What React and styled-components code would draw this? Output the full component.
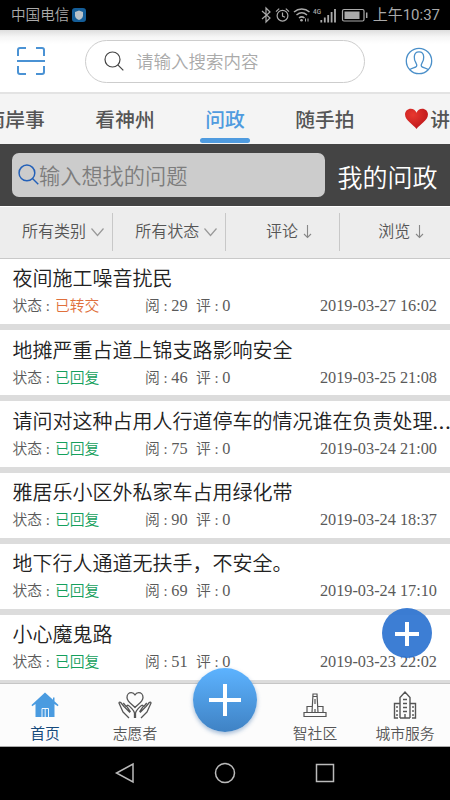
import styled, { createGlobalStyle } from 'styled-components'

const GlobalStyle = createGlobalStyle`
  * {
    box-sizing: border-box;
  }

  body {
    margin: 0;
    background: #fff;
    font-family: Roboto, 'Noto Sans CJK SC', sans-serif;
    font-weight: 350;
  }

  svg {
    display: block;
    flex-shrink: 0;
  }
`

const Phone = styled.div`
  display: flex;
  flex-direction: column;
  width: 450px;
  height: 800px;
  overflow: hidden;
  background: #fff;
`

const StatusBar = styled.div`
  display: flex;
  align-items: center;
  height: 30px;
  padding: 0 10px 0 11px;
  background: #000;
  color: #aaa;
  font-size: 14.6px;
  line-height: 32px;
  white-space: nowrap;

  .shield {
    margin-left: 3px;
  }

  .signals {
    margin-left: auto;
  }

  .time {
    margin-left: 4px;
    font-size: 15px;
    font-weight: 400;
  }
`

const Header = styled.div`
  display: flex;
  align-items: center;
  height: 62px;
  padding: 0 17px;
  background: linear-gradient(#dedede, #f6f6f6 7px, #fff 14px);

  .profile {
    margin-left: auto;
  }
`

const SearchPill = styled.div`
  display: flex;
  align-items: center;
  width: 280px;
  height: 43px;
  margin-left: 40px;
  padding-left: 18px;
  border: 1px solid #cdcdcd;
  border-radius: 22px;
  background: #fff;
  color: #aaa;
  font-size: 17.5px;
  line-height: 41px;

  svg {
    margin: -1px 12px 0 0;
  }

  span {
    padding-top: 2px;
  }
`

const Tabs = styled.div`
  display: flex;
  gap: 50.5px;
  height: 52px;
  border-top: 2px solid #e3e3e3;
  background: #f4f4f4;
  overflow: hidden;
`

const Tab = styled.div`
  display: flex;
  flex-shrink: 0;
  position: relative;
  margin-left: ${({ $pull }) => ($pull ? '-14.5px' : 0)};
  color: ${({ $active }) => ($active ? '#4f9bdf' : '#555')};
  font-size: 19.8px;
  font-weight: 500;
  line-height: 53px;
  white-space: nowrap;

  svg {
    margin: 14px 1px 0 -1px;
  }

  &::after {
    content: '';
    display: ${({ $active }) => ($active ? 'block' : 'none')};
    position: absolute;
    left: -5px;
    right: -5px;
    bottom: 1px;
    height: 5px;
    border-radius: 3px;
    background: #4f9bdf;
  }
`

const AskBar = styled.div`
  display: flex;
  align-items: center;
  height: 62px;
  padding: 0 12px;
  background: #444;
  color: #fff;
  font-size: 25px;
  white-space: nowrap;

  .mine {
    margin-left: 12.5px;
    padding-top: 7px;
    line-height: 55px;
  }
`

const AskInput = styled.div`
  display: flex;
  align-items: center;
  width: 313px;
  height: 44px;
  padding: 2px 0 0 6px;
  border-radius: 7px;
  background: #ccc;
  color: #7d7d7d;
  font-size: 21.2px;
  line-height: 42px;

  svg {
    margin: -3px 0 0;
  }

  span {
    padding-top: 2px;
  }
`

const Filters = styled.div`
  display: grid;
  grid-template-columns: repeat(3, 113.2px) 1fr;
  height: 53px;
  border-top: 1px solid #fff;
  border-bottom: 1px solid #c9c9c9;
  background: #ededed;
`

const Filter = styled.div`
  display: flex;
  align-items: center;
  justify-content: center;
  gap: 5px;
  height: 38px;
  margin-top: 6px;
  padding-left: ${({ $sort }) => ($sort ? '13px' : '14px')};
  border-right: 1px solid #c8c8c8;
  color: #555;
  font-size: 16px;
  line-height: 42px;
  white-space: nowrap;

  &:last-child {
    border-right: 0;
  }
`

const List = styled.div`
  position: relative;
  height: 424px;
  overflow: hidden;
  background: #fff;
`

const Row = styled.div`
  height: 71.2px;
  padding: 6.400px 0 0 12.5px;
  border-bottom: 6px solid #dcdcdc;
`

const Title = styled.div`
  height: 29px;
  color: #222;
  font-size: 20px;
  line-height: 29px;
  white-space: nowrap;

  .more {
    letter-spacing: 0.8px;
    font-weight: 500;
  }
`

const Meta = styled.div`
  display: grid;
  grid-template-columns: 42.5px 90px 51px 1fr auto;
  padding-right: 13px;
  color: #5a5a5a;
  font-family: 'Liberation Serif', 'Noto Sans CJK SC', serif;
  font-size: 14.8px;
  line-height: 24px;
  white-space: nowrap;

  .num {
    font-size: 16.3px;
  }
`

const State = styled.span`
  color: ${({ $moved }) => ($moved ? '#e0703c' : '#14a05c')};
`

const AddButton = styled.div`
  position: absolute;
  top: 349px;
  left: 382px;
  display: flex;
  align-items: center;
  justify-content: center;
  width: 50px;
  height: 50px;
  padding-top: 2px;
  border-radius: 50%;
  background: rgba(45, 115, 208, 0.92);
`

const BottomNav = styled.div`
  position: relative;
  display: grid;
  grid-template-columns: repeat(5, 1fr);
  height: 64px;
  border-top: 1px solid #c6c6c6;
  border-bottom: 1px solid #aaa;
  background: #fcfcfc;
`

const NavItem = styled.div`
  display: flex;
  flex-direction: column;
  align-items: center;
  padding-top: 6px;
  color: ${({ $active }) => ($active ? '#164a7c' : '#555')};
  font-size: 14.8px;
  font-weight: ${({ $active }) => ($active ? 400 : 350)};
  line-height: 26px;
  white-space: nowrap;
`

const BigAdd = styled.div`
  position: absolute;
  top: -16px;
  left: 193px;
  display: flex;
  align-items: center;
  justify-content: center;
  width: 64px;
  height: 64px;
  border-radius: 50%;
  background: linear-gradient(#5db3ff, #3f82c4);
  box-shadow: 0 2px 4px rgba(60, 110, 170, 0.45);
`

const SystemBar = styled.div`
  display: flex;
  justify-content: center;
  gap: 78px;
  height: 53px;
  padding-top: 15px;
  background: #000;
`

const Shield = () => (
  <svg className='shield' width='14' height='14' viewBox='0 0 14 14'>
    <rect width='14' height='14' rx='3' fill='#145d98' />
    <path d='M7 2.5 11 4v3.4c0 2-1.6 3.5-4 4.6-2.4-1.1-4-2.6-4-4.6V4Z' fill='#b9c2c9' />
  </svg>
)

const Signals = () => (
  <svg className='signals' width='108' height='20' viewBox='0 0 108 20' fill='none' stroke='#aaa' strokeWidth='1.2'>
    <path d='m1 6 8 7-4 4V3l4 4-8 7' />
    <circle cx='21.5' cy='10.7' r='5.4' />
    <path d='M21.5 7.5v3.5l2.5 1.2M15 6.6l3.2-3M24.8 3.6l3.2 3' />
    <path d='M33 7c4.500-4 11-4 15.500 0M35.500 10c3.300-2.800 7.200-2.800 10.500 0M38 13c1.800-1.500 3.700-1.500 5.500 0' strokeWidth='1.500' />
    <circle cx='40.500' cy='15.300' r='1.300' fill='#aaa' stroke='none' />
    <path d='M44.500 13.500v3M47 13.500v3' strokeWidth='1' />
    <text x='52' y='8.500' fill='#aaa' stroke='none' fontFamily='Roboto, sans-serif' fontWeight='500' fontSize='8' textLength='8' lengthAdjust='spacingAndGlyphs'>4G</text>
    <path d='M60.300 15v2.500M63.800 12.500v5M67.200 10v7.500M70.600 7v10.500M74 4v13.500' strokeWidth='1.800' />
    <rect x='81.500' y='4.500' width='21.500' height='11.500' rx='1.500' />
    <rect x='83.500' y='6.500' width='15' height='7.500' fill='#aaa' stroke='none' />
    <path d='M105.700 7.500v5.500' strokeWidth='1.500' />
  </svg>
)

const ScanIcon = () => (
  <svg width='28' height='28' viewBox='0 0 28 28' fill='none' stroke='#4a92d4' strokeWidth='2'>
    <path d='M1 9V3a2 2 0 0 1 2-2h6M19 1h6a2 2 0 0 1 2 2v6M1 19v6a2 2 0 0 0 2 2h6M19 27h6a2 2 0 0 0 2-2v-6M0 14h28' />
  </svg>
)

const SearchIcon = ({ size, color, width = 1.2 }) => (
  <svg width={size} height={size} viewBox='0 0 20 20' fill='none' stroke={color} strokeWidth={width}>
    <circle cx='8.500' cy='8.500' r='7.500' />
    <path d='m13.800 13.800 5.500 5.500' />
  </svg>
)

const ProfileIcon = () => (
  <svg className='profile' width='28' height='28' viewBox='0 0 28 28' fill='none' stroke='#4a8fc9' strokeWidth='1.300'>
    <circle cx='14' cy='14' r='12.700' />
    <path d='M5 22.500c1.500-1.700 5.500-1.700 6.500-3.200.7-1.100.2-2.300-.8-4-1.100-1.800-1.500-3.500-1.400-5.400.1-3.200 1.900-5.100 4.700-5.100s4.600 1.900 4.700 5.100c.1 1.900-.3 3.600-1.400 5.400-1 1.700-1.500 2.900-.8 4 1 1.500 5 1.500 6.500 3.200' />
  </svg>
)

const Heart = () => (
  <svg width='25' height='22' viewBox='0 0 24 22' preserveAspectRatio='none'>
    <defs>
      <radialGradient id='heart' cx='.35' cy='.3' r='.8'>
        <stop offset='0' stopColor='#e8382f' />
        <stop offset='1' stopColor='#b91419' />
      </radialGradient>
    </defs>
    <path d='M12 21C9 16.500 1 12.500 1 6.500 1 3 3.500.7 6.500.7c2.500 0 4.500 1.600 5.500 4 1-2.400 3-4 5.500-4 3 0 5.500 2.300 5.500 5.800 0 6-8 10-11 14.500Z' fill='url(#heart)' />
  </svg>
)

const Chevron = () => (
  <svg width='13' height='9' viewBox='0 0 13 9' fill='none' stroke='#999' strokeWidth='1.200'>
    <path d='m.5.5 6 7 6-7' />
  </svg>
)

const DownArrow = () => (
  <svg width='9' height='14' viewBox='0 0 9 14' fill='none' stroke='#888' strokeWidth='1.100'>
    <path d='M4.500 0v12.500M1 9l3.500 3.500L8 9' />
  </svg>
)

const Plus = ({ size, width }) => (
  <svg width={size} height={size} viewBox={`0 0 ${size} ${size}`} stroke='#fff' strokeWidth={width}>
    <path d={`M${size / 2} 0v${size}M0 ${size / 2}h${size}`} />
  </svg>
)

const HomeIcon = () => (
  <svg width='28' height='31' viewBox='0 0 28 31'>
    <path d='M14 2.500.500 15l.7 1.200L4.500 14v13h19V14l3.300 2.200.7-1.200-4-3.700V7.500h-1.500v2.300Z' fill='#4a9be0' />
    <path d='M11 27v-8.500h6.500V27M14.200 18.500V27' fill='none' stroke='#fff' strokeWidth='.9' />
  </svg>
)

const VolunteerIcon = () => (
  <svg width='34' height='31' viewBox='0 0 34 31' fill='none' stroke='#555' strokeWidth='1.300' strokeLinejoin='round'>
    <path d='M17 17.500c-2-2.500-8-5.500-8-10C9 4.500 11 2.700 13.300 2.700c1.700 0 3 .9 3.700 2.300.7-1.400 2-2.300 3.700-2.300C23 2.700 25 4.500 25 7.500c0 4.500-6 7.500-8 10Z' />
    <path d='M16.500 28v-5c0-2-4.500-6.500-6-7.500-1-.6-2 .2-1.400 1.300l3.400 5M12 22.500 6 16.500l-3.300-4c-1-1-2 0-1.500 1L5 22l6 6M8.500 16.800 5.300 13' />
    <path d='M17.500 28v-5c0-2 4.500-6.500 6-7.500 1-.6 2 .2 1.400 1.300l-3.400 5M22 22.500l6-6 3.300-4c1-1 2 0 1.500 1L29 22l-6 6M25.500 16.800l3.200-3.800' />
  </svg>
)

const CommunityIcon = () => (
  <svg width='24' height='31' viewBox='0 0 24 31' fill='none' stroke='#555' strokeWidth='1.200'>
    <path d='M9 22.500 10 4h4l1 18.500M10 6.500h4M12 9v5M9 16.500H4v6M15 16.500h5v6M12 19v3.500M1 22.500h22v4H1z' />
  </svg>
)

const CityIcon = () => (
  <svg width='24' height='31' viewBox='0 0 24 31' fill='none' stroke='#555' strokeWidth='1.400'>
    <path d='M7 28V7.500L12 2l5 5.500V28M7 13.500H1.500V28H5M17 13.500h5.500V28H19M7 28h10M10 9.500h4M10 13.500h4M10 17.500h4M10 21.500h4M12 24v4' />
    <path d='M4 16v2M4 20v2M4 24v2M20 16v2M20 20v2M20 24v2' />
  </svg>
)

const issues = [
  { title: '夜间施工噪音扰民', state: '已转交', moved: true, reads: 29, date: '2019-03-27 16:02' },
  { title: '地摊严重占道上锦支路影响安全', state: '已回复', reads: 46, date: '2019-03-25 21:08' },
  { title: '请问对这种占用人行道停车的情况谁在负责处理', more: true, state: '已回复', reads: 75, date: '2019-03-24 21:00' },
  { title: '雅居乐小区外私家车占用绿化带', state: '已回复', reads: 90, date: '2019-03-24 18:37' },
  { title: '地下行人通道无扶手，不安全。', state: '已回复', reads: 69, date: '2019-03-24 17:10' },
  { title: '小心魔鬼路', state: '已回复', reads: 51, date: '2019-03-23 22:02' },
]

const Issue = ({ title, more, state, moved, reads, date }) => (
  <Row>
    <Title>
      {title}
      {more && <span className='more'>...</span>}
    </Title>
    <Meta>
      <span>状态 :</span>
      <State $moved={moved}>{state}</State>
      <span>阅 : <span className='num'>{reads}</span></span>
      <span>评 : <span className='num'>0</span></span>
      <span className='num'>{date}</span>
    </Meta>
  </Row>
)

const App = () => {
  return (
    <>
      <GlobalStyle />
      <Phone>
        <StatusBar>
          <span>中国电信</span>
          <Shield />
          <Signals />
          <span className='time'>上午10:37</span>
        </StatusBar>
        <Header>
          <ScanIcon />
          <SearchPill>
            <SearchIcon size={20} color='#444' />
            <span>请输入搜索内容</span>
          </SearchPill>
          <ProfileIcon />
        </Header>
        <Tabs>
          <Tab $pull>南岸事</Tab>
          <Tab>看神州</Tab>
          <Tab $active>问政</Tab>
          <Tab>随手拍</Tab>
          <Tab><Heart />讲</Tab>
        </Tabs>
        <AskBar>
          <AskInput>
            <SearchIcon size={21} color='#2360b8' width={1.4} />
            <span>输入想找的问题</span>
          </AskInput>
          <span className='mine'>我的问政</span>
        </AskBar>
        <Filters>
          <Filter>所有类别<Chevron /></Filter>
          <Filter>所有状态<Chevron /></Filter>
          <Filter $sort>评论<DownArrow /></Filter>
          <Filter $sort>浏览<DownArrow /></Filter>
        </Filters>
        <List>
          {issues.map((issue) => (
            <Issue key={issue.title} {...issue} />
          ))}
          <AddButton>
            <Plus size={24} width={4} />
          </AddButton>
        </List>
        <BottomNav>
          <NavItem $active><HomeIcon />首页</NavItem>
          <NavItem><VolunteerIcon />志愿者</NavItem>
          <span />
          <NavItem><CommunityIcon />智社区</NavItem>
          <NavItem><CityIcon />城市服务</NavItem>
          <BigAdd>
            <Plus size={32} width={4} />
          </BigAdd>
        </BottomNav>
        <SystemBar>
          <svg width='22' height='22' viewBox='0 0 22 22' fill='none' stroke='#bbb' strokeWidth='1.500'>
            <path d='M19 2v18L2.500 11Z' />
          </svg>
          <svg width='22' height='22' viewBox='0 0 22 22' fill='none' stroke='#bbb' strokeWidth='1.500'>
            <circle cx='11' cy='11' r='9.500' />
          </svg>
          <svg width='22' height='22' viewBox='0 0 22 22' fill='none' stroke='#bbb' strokeWidth='1.500'>
            <rect x='2.500' y='2.500' width='17' height='17' />
          </svg>
        </SystemBar>
      </Phone>
    </>
  )
}

export default App
